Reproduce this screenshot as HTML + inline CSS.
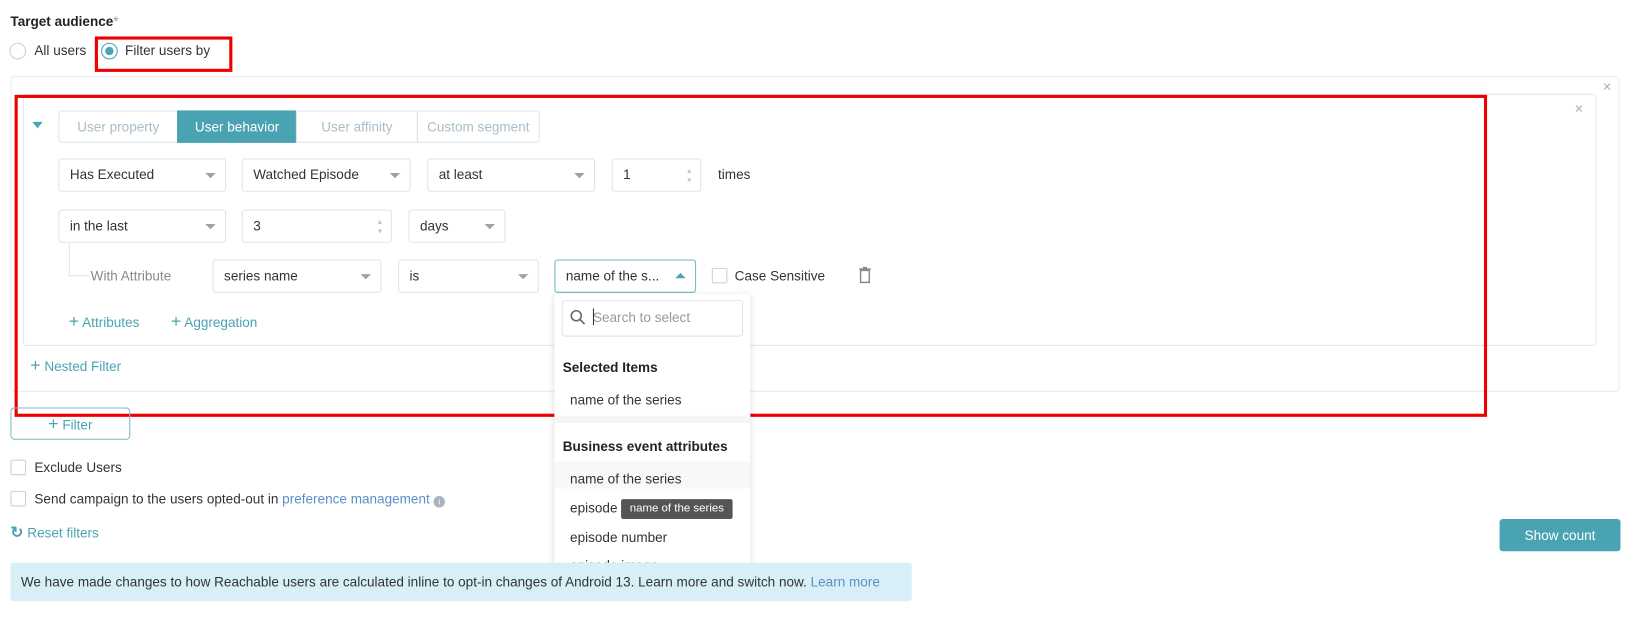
<!DOCTYPE html>
<html><head><meta charset="utf-8"><style>
*{box-sizing:border-box}
html,body{margin:0;width:1634px;height:622px;overflow:hidden;background:#fff}
#w{position:absolute;left:0;top:0;width:1568px;height:597px;transform:scale(1.0421);transform-origin:0 0;font-family:"Liberation Sans",sans-serif;font-size:13px;color:#333}
.a{position:absolute}
.sel{position:absolute;height:32px;border:1px solid #dfe3e8;border-radius:3px;background:#fff;padding:0 10px;line-height:30px;color:#333}
.sel .ar{position:absolute;right:9px;top:13px;width:0;height:0;border-left:5px solid transparent;border-right:5px solid transparent;border-top:5px solid #9aa3ab}
.spin{position:absolute;right:7px;top:7px;font-size:7px;color:#c0c6cc;line-height:9px}
.cb{position:absolute;width:15px;height:15px;border:1px solid #c9d0d8;border-radius:2px;background:#fff}
.teal{color:#4aa3b3}
.tab{position:absolute;top:106px;height:31px;line-height:29px;text-align:center;color:#a9bcc8;border:1px solid #dfe3e8;background:#fff}
</style></head><body><div id="w">
<div class="a" style="left:10px;top:13px;font-weight:bold;font-size:13px;color:#222">Target audience<span style="color:#999;font-weight:normal">*</span></div>
<div class="a" style="left:9px;top:41px;width:16px;height:16px;border:1px solid #c9d0d8;border-radius:50%"></div>
<div class="a" style="left:33px;top:41px">All users</div>
<div class="a" style="left:97px;top:41px;width:16px;height:16px;border:1px solid #4aa3b3;border-radius:50%"><div style="margin:3px;width:8px;height:8px;border-radius:50%;background:#4aa3b3"></div></div>
<div class="a" style="left:120px;top:41px">Filter users by</div>
<div class="a" style="left:91px;top:35px;width:132px;height:34px;border:3px solid #e00"></div>

<div class="a" style="left:10px;top:73px;width:1544px;height:303px;border:1px solid #e8ecf0;border-radius:3px"></div>
<div class="a" style="left:1538px;top:75px;color:#aaa;font-size:14px">×</div>
<div class="a" style="left:22px;top:90px;width:1510px;height:242px;border:1px solid #e3e7ec;border-radius:3px"></div>
<div class="a" style="left:1511px;top:96px;color:#aaa;font-size:14px">×</div>
<div class="a" style="left:31px;top:117px;width:0;height:0;border-left:5px solid transparent;border-right:5px solid transparent;border-top:6px solid #4aa3b3"></div>

<div class="tab" style="left:56px;width:115px;border-radius:3px 0 0 3px">User property</div>
<div class="tab" style="left:170px;width:115px;background:#4aa3b3;border-color:#4aa3b3;color:#fff">User behavior</div>
<div class="tab" style="left:284px;width:117px">User affinity</div>
<div class="tab" style="left:400px;width:118px;border-radius:0 3px 3px 0">Custom segment</div>

<div class="sel" style="left:56px;top:152px;width:161px">Has Executed<i class="ar"></i></div>
<div class="sel" style="left:232px;top:152px;width:162px">Watched Episode<i class="ar"></i></div>
<div class="sel" style="left:410px;top:152px;width:161px">at least<i class="ar"></i></div>
<div class="sel" style="left:587px;top:152px;width:86px">1<div class="spin">▲<br>▼</div></div>
<div class="a" style="left:689px;top:160px">times</div>

<div class="sel" style="left:56px;top:201px;width:161px">in the last<i class="ar"></i></div>
<div class="sel" style="left:232px;top:201px;width:144px">3<div class="spin">▲<br>▼</div></div>
<div class="sel" style="left:392px;top:201px;width:93px">days<i class="ar"></i></div>

<div class="a" style="left:66px;top:233px;width:20px;height:32px;border-left:1px solid #dfe3e8;border-bottom:1px solid #dfe3e8"></div>
<div class="a" style="left:87px;top:257px;color:#888">With Attribute</div>
<div class="sel" style="left:204px;top:249px;width:162px">series name<i class="ar"></i></div>
<div class="sel" style="left:382px;top:249px;width:135px">is<i class="ar"></i></div>
<div class="sel" style="left:532px;top:249px;width:136px;border-color:#6fb6c2">name of the s...<i class="ar" style="border-top:0;border-bottom:5px solid #4aa3b3;top:12px"></i></div>
<div class="cb" style="left:683px;top:257px"></div>
<div class="a" style="left:705px;top:257px">Case Sensitive</div>
<svg class="a" style="left:824px;top:256px" width="12" height="16" viewBox="0 0 12 16"><rect x="0.5" y="1.5" width="11" height="1.5" fill="#888"/><rect x="4" y="0" width="4" height="2" fill="#888"/><rect x="1.8" y="3.5" width="8.4" height="11.5" fill="none" stroke="#888" stroke-width="1.4"/></svg>

<div class="a teal" style="left:66px;top:302px"><span style="font-size:17px;line-height:13px">+</span> Attributes</div>
<div class="a teal" style="left:164px;top:302px"><span style="font-size:17px;line-height:13px">+</span> Aggregation</div>
<div class="a teal" style="left:29px;top:344px"><span style="font-size:17px;line-height:13px">+</span> Nested Filter</div>

<div class="a" style="left:14px;top:91px;width:1413px;height:309px;border:3px solid #e00"></div>

<div class="a" style="left:10px;top:391px;width:115px;height:31px;border:1px solid #7ab9c4;border-radius:4px;text-align:center;line-height:29px" ><span class="teal"><span style="font-size:17px">+</span> Filter</span></div>

<div class="a" style="left:532px;top:282px;width:188px;height:268px;background:#fff;box-shadow:0 2px 6px rgba(0,0,0,.15);border-radius:3px;overflow:hidden">
 <div class="a" style="left:7px;top:6px;width:174px;height:35px;border:1px solid #dfe3e8;border-radius:3px"></div>
 <svg class="a" style="left:15px;top:15px" width="15" height="15" viewBox="0 0 15 15"><circle cx="6" cy="6" r="4.8" fill="none" stroke="#666" stroke-width="1.5"/><line x1="9.5" y1="9.5" x2="14" y2="14" stroke="#666" stroke-width="1.6"/></svg>
 <div class="a" style="left:37px;top:15px;color:#999">Search to select</div>
 <div class="a" style="left:37px;top:14px;width:1px;height:16px;background:#333"></div>
 <div class="a" style="left:8px;top:63px;font-weight:bold;color:#222">Selected Items</div>
 <div class="a" style="left:15px;top:94px">name of the series</div>
 <div class="a" style="left:0;top:117px;width:188px;height:7px;background:#f3f5f7"></div>
 <div class="a" style="left:8px;top:139px;font-weight:bold;color:#222">Business event attributes</div>
 <div class="a" style="left:0;top:161px;width:188px;height:26px;background:#f7f8f9"></div>
 <div class="a" style="left:15px;top:170px">name of the series</div>
 <div class="a" style="left:15px;top:198px">episode</div>
 <div class="a" style="left:15px;top:226px">episode number</div>
 <div class="a" style="left:15px;top:253px">episode image</div>
</div>
<div class="a" style="left:596px;top:479px;width:107px;height:19px;background:#555;color:#fff;font-size:11px;line-height:19px;text-align:center;border-radius:2px">name of the series</div>

<div class="cb" style="left:10px;top:441px"></div>
<div class="a" style="left:33px;top:441px">Exclude Users</div>
<div class="cb" style="left:10px;top:471px"></div>
<div class="a" style="left:33px;top:471px">Send campaign to the users opted-out in <span style="color:#5b8fc7">preference management</span> <span style="display:inline-block;width:11px;height:11px;border-radius:50%;background:#aab4be;color:#fff;font-size:8px;text-align:center;line-height:11px;vertical-align:-1px">i</span></div>
<div class="a teal" style="left:10px;top:504px"><span style="font-weight:bold;font-size:15px;line-height:13px">↻</span> Reset filters</div>

<div class="a" style="left:1439px;top:498px;width:116px;height:31px;background:#4aa3b3;border-radius:3px;color:#fff;text-align:center;line-height:31px">Show count</div>

<div class="a" style="left:10px;top:540px;width:865px;height:37px;background:#d8eff8;border-radius:3px;padding-left:10px;line-height:37px;color:#333">We have made changes to how Reachable users are calculated inline to opt-in changes of Android 13. Learn more and switch now. <span style="color:#5b8fc7">Learn more</span></div>
</div></body></html>
